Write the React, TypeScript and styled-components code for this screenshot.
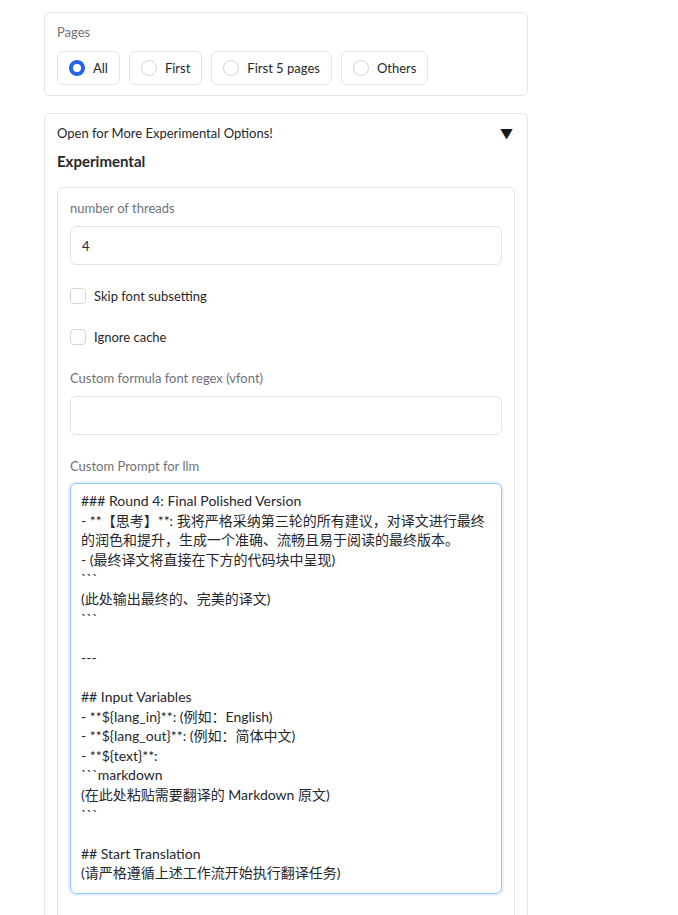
import React, { useState } from "react";
import styled, { createGlobalStyle } from "styled-components";

const Global = createGlobalStyle`
  html, body { margin: 0; padding: 0; background: #ffffff; }
  body {
    font-family: "Lato", "Noto Sans CJK SC", sans-serif;
    color: #27272a;
    font-size: 13px;
  }
  * { box-sizing: border-box; }
`;

const FONT = `"Lato", "Noto Sans CJK SC", sans-serif`;

const Page = styled.div`
  width: 484px;
  margin-left: 44px;
  padding-top: 12px;
  padding-bottom: 40px;
  display: flex;
  flex-direction: column;
  gap: 17px;
`;

const Block = styled.div`
  border: 1px solid #e4e4e7;
  border-radius: 6px;
  background: #ffffff;
  padding: 9px 12px 10px;
  display: flex;
  flex-direction: column;
`;

const Label = styled.div`
  font-size: 13px;
  line-height: 20px;
  color: #71717a;
`;

const RadioRow = styled.div`
  display: flex;
  gap: 9px;
  margin-top: 9px;
`;

const RadioItem = styled.label`
  display: flex;
  align-items: center;
  gap: 8px;
  height: 34px;
  padding: 0 11px;
  border: 1px solid #e4e4e7;
  border-radius: 6px;
  font-size: 13px;
  color: #27272a;
  cursor: pointer;
`;

const RadioDot = styled.span<{ $on: boolean }>`
  width: 16px;
  height: 16px;
  border-radius: 50%;
  flex: none;
  box-sizing: border-box;
  border: ${(p) => (p.$on ? "4.5px solid #2563eb" : "1px solid #d4d4d8")};
  background: #ffffff;
`;

const AccHeader = styled.div`
  display: flex;
  align-items: center;
  justify-content: space-between;
  line-height: 20px;
  font-size: 13px;
  color: #27272a;
`;

const Caret = styled.span`
  font-size: 13px;
  color: #18181b;
  margin-right: 2px;
`;

const Heading = styled.div`
  font-weight: 700;
  font-size: 15px;
  line-height: 20px;
  margin-top: 8px;
  color: #27272a;
`;

const InnerBlock = styled.div`
  margin-top: 16px;
  border: 1px solid #e4e4e7;
  border-radius: 6px;
  padding: 10px 12px 40px;
  display: flex;
  flex-direction: column;
  gap: 21px;
`;

const Field = styled.div`
  display: flex;
  flex-direction: column;
  gap: 8px;
`;

const TextInput = styled.input`
  height: 39px;
  width: 100%;
  border: 1px solid #e4e4e7;
  border-radius: 6px;
  padding: 0 11px;
  font-family: ${FONT};
  font-size: 13px;
  color: #27272a;
  outline: none;
  background: #ffffff;
`;

const CheckRow = styled.label`
  display: flex;
  align-items: center;
  gap: 8px;
  line-height: 20px;
  font-size: 13px;
  color: #27272a;
`;

const CheckBox = styled.span`
  width: 16px;
  height: 16px;
  border: 1px solid #d4d4d8;
  border-radius: 4px;
  flex: none;
  background: #ffffff;
`;

const PromptArea = styled.textarea`
  width: 100%;
  height: 411px;
  margin-top: -1px;
  border: 1px solid #93c5fd;
  border-radius: 6px;
  box-shadow: 0 0 0 2px #eaf3ff;
  padding: 7px 10px 10px;
  font-family: ${FONT};
  font-size: 14px;
  line-height: 19.6px;
  color: #27272a;
  resize: none;
  outline: none;
  overflow: hidden;
  background: #ffffff;
`;

const PROMPT = [
  "### Round 4: Final Polished Version",
  "- **【思考】**: 我将严格采纳第三轮的所有建议，对译文进行最终的润色和提升，生成一个准确、流畅且易于阅读的最终版本。",
  "- (最终译文将直接在下方的代码块中呈现)",
  "```",
  "(此处输出最终的、完美的译文)",
  "```",
  "",
  "---",
  "",
  "## Input Variables",
  "- **${lang_in}**: (例如：English)",
  "- **${lang_out}**: (例如：简体中文)",
  "- **${text}**:",
  "```markdown",
  "(在此处粘贴需要翻译的 Markdown 原文)",
  "```",
  "",
  "## Start Translation",
  "(请严格遵循上述工作流开始执行翻译任务)",
].join("\n");

const OPTIONS = ["All", "First", "First 5 pages", "Others"];

export default function App() {
  const [page, setPage] = useState("All");
  const [prompt, setPrompt] = useState(PROMPT);
  return (
    <>
      <Global />
      <Page>
        <Block>
          <Label>Pages</Label>
          <RadioRow>
            {OPTIONS.map((o) => (
              <RadioItem key={o} onClick={() => setPage(o)}>
                <RadioDot $on={page === o} />
                {o}
              </RadioItem>
            ))}
          </RadioRow>
        </Block>
        <Block>
          <AccHeader>
            <span>Open for More Experimental Options!</span>
            <Caret>▼</Caret>
          </AccHeader>
          <Heading>Experimental</Heading>
          <InnerBlock>
            <Field>
              <Label>number of threads</Label>
              <TextInput defaultValue="4" />
            </Field>
            <CheckRow>
              <CheckBox />
              Skip font subsetting
            </CheckRow>
            <CheckRow>
              <CheckBox />
              Ignore cache
            </CheckRow>
            <Field>
              <Label>Custom formula font regex (vfont)</Label>
              <TextInput defaultValue="" />
            </Field>
            <Field>
              <Label>Custom Prompt for llm</Label>
              <PromptArea value={prompt} onChange={(e) => setPrompt(e.target.value)} />
            </Field>
          </InnerBlock>
        </Block>
      </Page>
    </>
  );
}
